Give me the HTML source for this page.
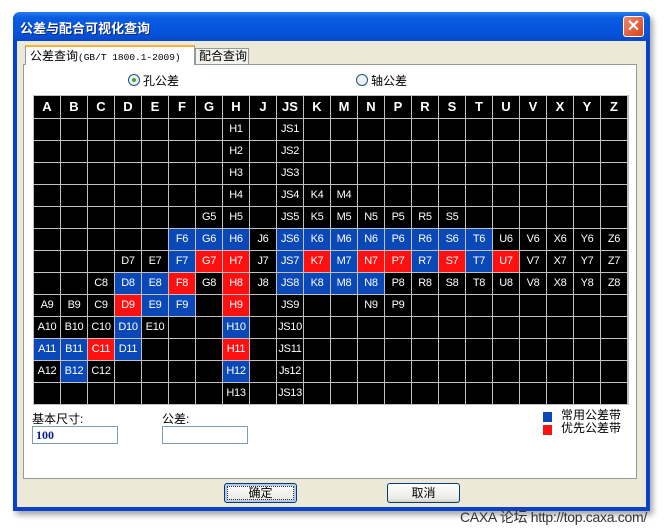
<!DOCTYPE html>
<html><head><meta charset="utf-8"><style>
*{margin:0;padding:0;box-sizing:border-box}
body{width:671px;height:531px;background:#fff;position:relative;overflow:hidden;font-family:"Liberation Sans","Noto Sans CJK SC",sans-serif;font-size:12px}
.win{position:absolute;left:13px;top:12px;width:637px;height:499px;background:#0842c8;border-radius:7px 7px 0 0;box-shadow:3px 4px 6px rgba(0,0,0,.35)}
.title{position:absolute;left:0;top:0;width:637px;height:29px;border-radius:7px 7px 0 0;background:linear-gradient(#2a7cf0,#0a5ce0 20%,#0553dc 70%,#0a48c8)}
.title span{position:absolute;left:7px;top:6px;color:#fff;font-weight:bold;font-size:13px;text-shadow:1px 1px #0a2a80}
.close{position:absolute;left:610px;top:4px;width:21px;height:21px;border:1px solid #fff;border-radius:3px;background:linear-gradient(135deg,#f08a6a,#d8401a);color:#fff;font-size:16px;line-height:19px;text-align:center;font-weight:bold}
.client{position:absolute;left:4px;top:29px;width:629px;height:466px;background:#ece9d8}
.pane{position:absolute;background:#fff;border:1px solid #919b9c}
.tab1{position:absolute;width:170px;height:20px;background:#fff;border:1px solid #919b9c;border-bottom:none;border-top:2px solid #f7b23a;font-family:"Liberation Mono","Noto Sans CJK SC",monospace;font-size:9.5px;padding:2px 4px;z-index:2;white-space:nowrap;line-height:14px}
.tab1 b{font-weight:normal;font-family:"Noto Sans CJK SC",sans-serif;font-size:12px}
.tab2{position:absolute;width:54px;height:17px;background:#f4f3ee;border:1px solid #919b9c;font-size:12px;padding:0 3px;white-space:nowrap;line-height:15px}
.radio{position:absolute;width:12px;height:12px;border:1px solid #1c5180;border-radius:50%;background:#f0f0f0}
.radio.on::after{content:"";position:absolute;left:3px;top:3px;width:4px;height:4px;border-radius:50%;background:#3aa83a}
.lbl{position:absolute;font-size:12px;white-space:nowrap}
.grid{position:absolute;left:33px;top:95px;width:596px;display:grid;grid-template-columns:repeat(22,26px);grid-template-rows:22px repeat(13,21px);gap:1px;padding:1px;background:#c0c0c0}
.grid div{background:#000;color:#fff;text-align:center;font-size:11px;line-height:21px;letter-spacing:-0.3px}
.grid .h{font-weight:bold;font-size:13px;line-height:22px;letter-spacing:0}
.grid .b{background:#0a48b8}.grid .r{background:#ff1010}
.inp{position:absolute;width:86px;height:18px;border:1px solid #7f9db9;background:#fff}
.btn{position:absolute;top:483px;width:73px;height:20px;border:1px solid #003c74;border-radius:3px;background:linear-gradient(#fff,#ecebe6 80%,#d6d0c5);text-align:center;line-height:18px;font-size:12px}
</style></head><body>
<div class="win"><div class="title"><span>公差与配合可视化查询</span><div class="close">✕</div></div>
<div class="client"></div></div>
<div class="pane" style="left:23px;top:64px;width:614px;height:415px"></div>
<div class="tab1" style="left:25px;top:45px"><b>公差查询</b>(GB/T 1800.1-2009)</div>
<div class="tab2" style="left:195px;top:48px">配合查询</div>
<div class="radio on" style="left:128px;top:74px"></div><div class="lbl" style="left:143px;top:72px">孔公差</div>
<div class="radio" style="left:356px;top:74px"></div><div class="lbl" style="left:371px;top:72px">轴公差</div>
<div class="grid">
<div class="h">A</div><div class="h">B</div><div class="h">C</div><div class="h">D</div><div class="h">E</div><div class="h">F</div><div class="h">G</div><div class="h">H</div><div class="h">J</div><div class="h">JS</div><div class="h">K</div><div class="h">M</div><div class="h">N</div><div class="h">P</div><div class="h">R</div><div class="h">S</div><div class="h">T</div><div class="h">U</div><div class="h">V</div><div class="h">X</div><div class="h">Y</div><div class="h">Z</div>
<div></div><div></div><div></div><div></div><div></div><div></div><div></div><div>H1</div><div></div><div>JS1</div><div></div><div></div><div></div><div></div><div></div><div></div><div></div><div></div><div></div><div></div><div></div><div></div>
<div></div><div></div><div></div><div></div><div></div><div></div><div></div><div>H2</div><div></div><div>JS2</div><div></div><div></div><div></div><div></div><div></div><div></div><div></div><div></div><div></div><div></div><div></div><div></div>
<div></div><div></div><div></div><div></div><div></div><div></div><div></div><div>H3</div><div></div><div>JS3</div><div></div><div></div><div></div><div></div><div></div><div></div><div></div><div></div><div></div><div></div><div></div><div></div>
<div></div><div></div><div></div><div></div><div></div><div></div><div></div><div>H4</div><div></div><div>JS4</div><div>K4</div><div>M4</div><div></div><div></div><div></div><div></div><div></div><div></div><div></div><div></div><div></div><div></div>
<div></div><div></div><div></div><div></div><div></div><div></div><div>G5</div><div>H5</div><div></div><div>JS5</div><div>K5</div><div>M5</div><div>N5</div><div>P5</div><div>R5</div><div>S5</div><div></div><div></div><div></div><div></div><div></div><div></div>
<div></div><div></div><div></div><div></div><div></div><div class="b">F6</div><div class="b">G6</div><div class="b">H6</div><div>J6</div><div class="b">JS6</div><div class="b">K6</div><div class="b">M6</div><div class="b">N6</div><div class="b">P6</div><div class="b">R6</div><div class="b">S6</div><div class="b">T6</div><div>U6</div><div>V6</div><div>X6</div><div>Y6</div><div>Z6</div>
<div></div><div></div><div></div><div>D7</div><div>E7</div><div class="b">F7</div><div class="r">G7</div><div class="r">H7</div><div>J7</div><div class="b">JS7</div><div class="r">K7</div><div class="b">M7</div><div class="r">N7</div><div class="r">P7</div><div class="b">R7</div><div class="r">S7</div><div class="b">T7</div><div class="r">U7</div><div>V7</div><div>X7</div><div>Y7</div><div>Z7</div>
<div></div><div></div><div>C8</div><div class="b">D8</div><div class="b">E8</div><div class="r">F8</div><div>G8</div><div class="r">H8</div><div>J8</div><div class="b">JS8</div><div class="b">K8</div><div class="b">M8</div><div class="b">N8</div><div>P8</div><div>R8</div><div>S8</div><div>T8</div><div>U8</div><div>V8</div><div>X8</div><div>Y8</div><div>Z8</div>
<div>A9</div><div>B9</div><div>C9</div><div class="r">D9</div><div class="b">E9</div><div class="b">F9</div><div></div><div class="r">H9</div><div></div><div>JS9</div><div></div><div></div><div>N9</div><div>P9</div><div></div><div></div><div></div><div></div><div></div><div></div><div></div><div></div>
<div>A10</div><div>B10</div><div>C10</div><div class="b">D10</div><div>E10</div><div></div><div></div><div class="b">H10</div><div></div><div>JS10</div><div></div><div></div><div></div><div></div><div></div><div></div><div></div><div></div><div></div><div></div><div></div><div></div>
<div class="b">A11</div><div class="b">B11</div><div class="r">C11</div><div class="b">D11</div><div></div><div></div><div></div><div class="r">H11</div><div></div><div>JS11</div><div></div><div></div><div></div><div></div><div></div><div></div><div></div><div></div><div></div><div></div><div></div><div></div>
<div>A12</div><div class="b">B12</div><div>C12</div><div></div><div></div><div></div><div></div><div class="b">H12</div><div></div><div>Js12</div><div></div><div></div><div></div><div></div><div></div><div></div><div></div><div></div><div></div><div></div><div></div><div></div>
<div></div><div></div><div></div><div></div><div></div><div></div><div></div><div>H13</div><div></div><div>JS13</div><div></div><div></div><div></div><div></div><div></div><div></div><div></div><div></div><div></div><div></div><div></div><div></div>
</div>
<div class="lbl" style="left:32px;top:410px">基本尺寸:</div>
<div class="inp" style="left:32px;top:426px;padding:1px 3px;font-family:'Liberation Serif',serif;font-weight:bold;color:#0a1a8a;font-size:12px">100</div>
<div class="lbl" style="left:162px;top:410px">公差:</div>
<div class="inp" style="left:162px;top:426px"></div>
<div style="position:absolute;left:543px;top:412px;width:9px;height:10px;background:#0a48b8"></div>
<div style="position:absolute;left:543px;top:425px;width:9px;height:10px;background:#ff1010"></div>
<div class="lbl" style="left:561px;top:409px;line-height:13px">常用公差带<br>优先公差带</div>
<div class="btn" style="left:224px;outline:1px dotted #333;outline-offset:-4px;box-shadow:inset 0 0 0 2px #b4c8f0">确定</div>
<div class="btn" style="left:387px">取消</div>
<div class="lbl" style="left:460px;top:507px;color:#333;font-size:14px;letter-spacing:-0.3px">CAXA 论坛 http://top.caxa.com/</div>
</body></html>
